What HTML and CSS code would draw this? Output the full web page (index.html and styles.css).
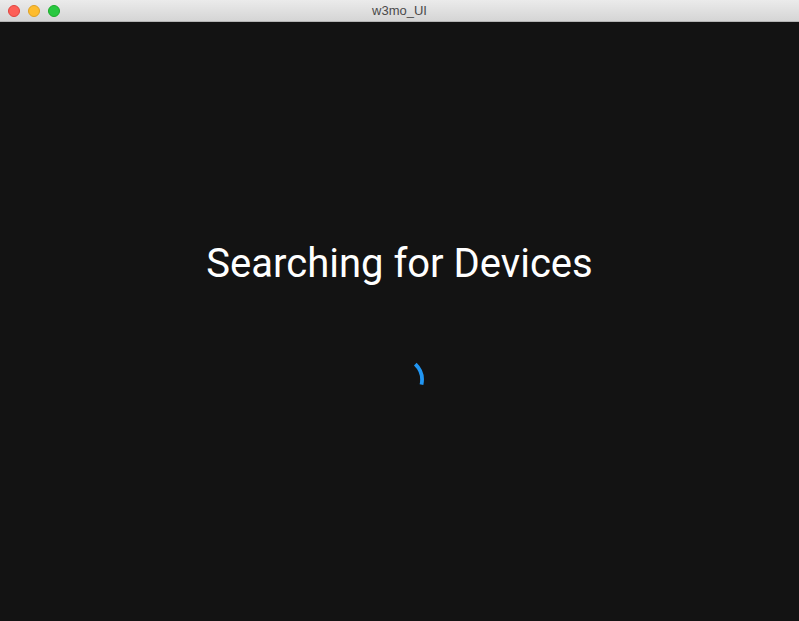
FILE: index.html
```html
<!DOCTYPE html>
<html>
<head>
<meta charset="utf-8">
<title>w3mo_UI</title>
<link rel="stylesheet" href="styles.css">
</head>
<body>
<div class="window">
  <div class="titlebar">
    <div class="lights">
      <span class="light red"></span>
      <span class="light yellow"></span>
      <span class="light green"></span>
    </div>
    <div class="title">w3mo_UI</div>
  </div>
  <div class="content">
    <h1 class="heading">Searching for Devices</h1>
    <svg class="spinner" width="50" height="50" viewBox="0 0 50 50">
      <path d="M 40.3 9.2 A 22 22 0 0 1 46.5 29.6" fill="none" stroke="#2196f3" stroke-width="3.8" stroke-linecap="butt"/>
    </svg>
  </div>
</div>
</body>
</html>
```
FILE: styles.css
```css
html, body {
  margin: 0;
  padding: 0;
  width: 799px;
  height: 621px;
  overflow: hidden;
  background: #131313;
}
.window {
  display: flex;
  flex-direction: column;
  width: 799px;
  height: 621px;
}
.titlebar {
  position: relative;
  height: 21px;
  flex: 0 0 21px;
  background: linear-gradient(#ebebeb, #d5d5d5);
  border-bottom: 1px solid #b4b4b4;
  display: flex;
  align-items: center;
  justify-content: center;
}
.lights {
  position: absolute;
  left: 8px;
  top: 5px;
  display: flex;
  gap: 8px;
}
.light {
  width: 12px;
  height: 12px;
  border-radius: 50%;
  box-sizing: border-box;
}
.red { background: #fd5f57; border: 0.5px solid #e0443e; }
.yellow { background: #febc2e; border: 0.5px solid #dea123; }
.green { background: #28c840; border: 0.5px solid #1aab29; }
.title {
  font-family: "Helvetica Neue", "Liberation Sans", Arial, sans-serif;
  font-size: 13px;
  color: #4a4a4a;
  line-height: 21px;
}
.content {
  flex: 1;
  display: flex;
  flex-direction: column;
  align-items: center;
  padding-top: 218px;
  box-sizing: border-box;
}
.heading {
  margin: 0;
  font-family: Roboto, "Noto Sans", sans-serif;
  font-weight: 400;
  font-size: 40px;
  line-height: 48px;
  color: #ffffff;
  white-space: nowrap;
}
.spinner {
  display: block;
  margin-top: 67px;
}
```
